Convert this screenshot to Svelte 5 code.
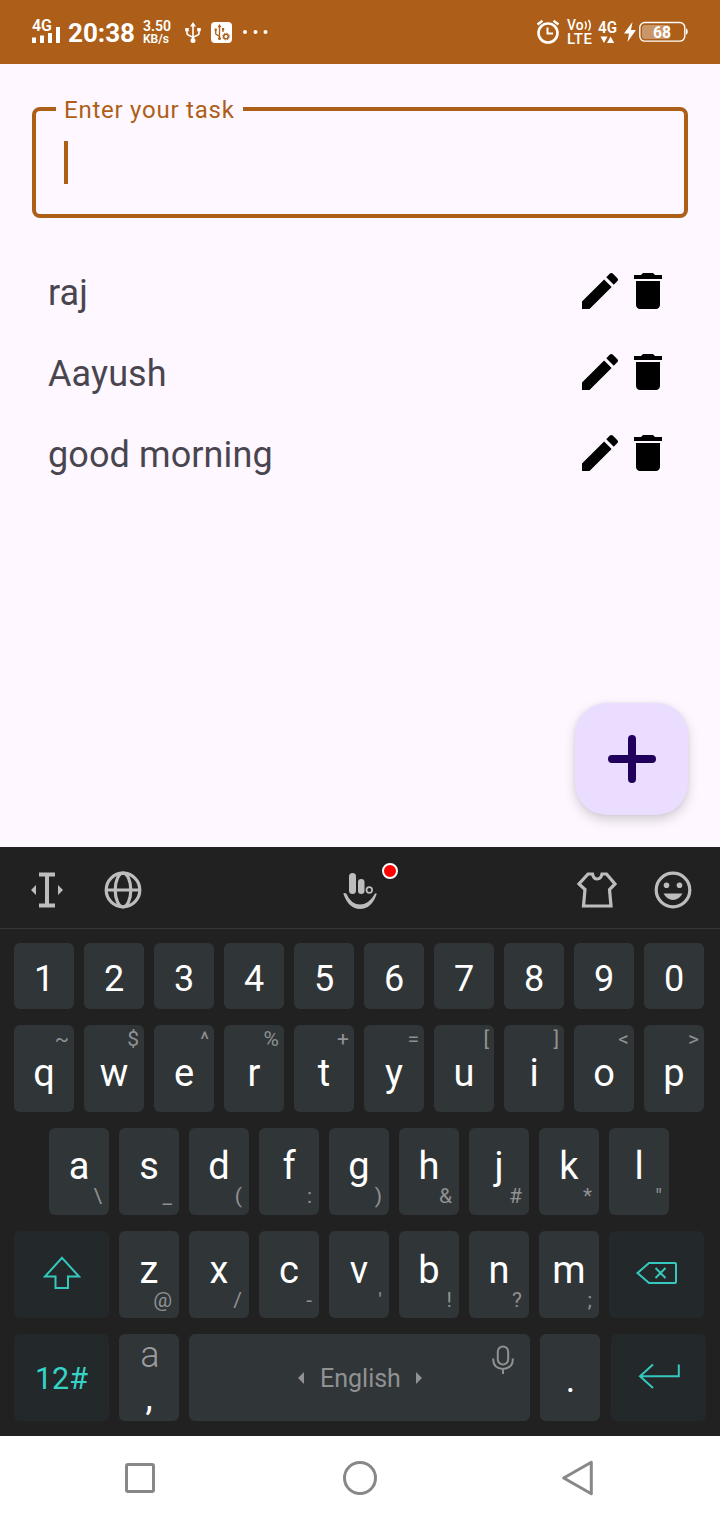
<script>
  const tasks = ['raj', 'Aayush', 'good morning'];
  const digits = [...'1234567890'];
  const pair = (keys, hints) => [...keys].map((k, i) => ({ k, h: hints[i] }));
  const top = pair('qwertyuiop', '~$^%+=[]<>');
  const home = pair('asdfghjkl', '\\_(:)&#*"');
  const bottom = pair('zxcvbnm', "@/-'!?;");
</script>

{#snippet key(item, place)}
  <button class="key letter {place}">
    <span class="main">{item.k}</span>
    <span class="hint">{item.h}</span>
  </button>
{/snippet}

<div class="screen">
  <header class="status">
    <svg class="signal" width="30" height="30" viewBox="0 0 30 30">
      <text x="0" y="14.700" font-size="16.500" font-weight="600" textLength="20" lengthAdjust="spacingAndGlyphs">4G</text>
      <path d="M0 21.500h4v5.500h-4zM8 19.500h4v7.500h-4zM16 17h4v10h-4zM24 11h4v16h-4z" />
    </svg>
    <span class="time">20:38</span>
    <svg class="speed" width="30" height="30" viewBox="0 0 30 30">
      <text x="0" y="15" font-size="14.500" font-weight="600" textLength="28" lengthAdjust="spacingAndGlyphs">3.50</text>
      <text x="0" y="27.300" font-size="13" font-weight="600" textLength="26" lengthAdjust="spacingAndGlyphs">KB/s</text>
    </svg>
    <svg class="usb" width="16" height="22" viewBox="0 0 16 22">
      <g fill="none" stroke="#fff" stroke-width="1.600"><path d="M8 4v14M2 8v3.500c0 2.500 6 2.500 6 4.500M14 8v3.500c0 2.500-6 2.500-6 4.500" /></g>
      <path d="M8 0l3 4.500H5zM.2 6h3.600v3.200H.2zM12.200 6h3.600v3.200h-3.600z" /><circle cx="8" cy="18.500" r="2.500" />
    </svg>
    <svg class="usbbox" width="21" height="21" viewBox="0 0 21 21">
      <rect width="21" height="21" rx="4" />
      <g fill="none" stroke="#ad5f19"><path stroke-width="1.300" d="M8.500 4.500v12M4.700 8v3.500c0 1.700 3.800 1.700 3.800 3.500M12 7v3" /><circle cx="15" cy="14.500" r="2.300" stroke-width="1.500" /><circle cx="15" cy="14.500" r="3.400" stroke-width="1" stroke-dasharray="1.340 1.340" /></g>
      <path class="ink" d="M8.500 2l2 3.300H6.500zM3.600 6.500h2.200v2.200H3.600zM11 6h2.200v2.200H11z" />
      <circle class="ink" cx="8.500" cy="16.500" r="1.500" />
    </svg>
    <svg class="dots" width="26" height="4" viewBox="0 0 26 4"><circle cx="2" cy="2" r="2" /><circle cx="12.500" cy="2" r="2" /><circle cx="22.500" cy="2" r="2" /></svg>

    <svg class="alarm" width="24" height="26" viewBox="0 0 24 26">
      <g fill="none" stroke="#fff"><circle cx="12" cy="14" r="9.500" stroke-width="2.600" /><path d="M11.500 8.500v6h5.500" stroke-width="2" /><path d="M1.500 5.500l5-3.800M22.500 5.500l-5-3.800" stroke-width="2.400" /></g>
    </svg>
    <svg class="volte" width="26" height="28" viewBox="0 0 26 28">
      <text x="0" y="12" font-size="14" font-weight="500" textLength="16.500" lengthAdjust="spacingAndGlyphs">Vo</text>
      <path d="M18 3.500q2.600 3.800 0 7.600M21.500 2q3.600 5.300 0 10.600" fill="none" stroke="#fff" stroke-width="1.500" />
      <text x="0" y="26" font-size="15" font-weight="500" textLength="25" lengthAdjust="spacing">LTE</text>
    </svg>
    <svg class="data" width="20" height="26" viewBox="0 0 20 26">
      <text x="0" y="14" font-size="16.500" font-weight="600" textLength="19" lengthAdjust="spacingAndGlyphs">4G</text>
      <path d="M2.500 17.500h7L6 24zM9 24h7.200L12.600 17.500z" />
    </svg>
    <svg class="bolt" width="12" height="20" viewBox="0 0 12 20"><path d="M8.500 0L0 11.500h5L3.500 20 12 8H7z" /></svg>
    <svg class="battery" width="49" height="22" viewBox="0 0 49 22">
      <rect x=".8" y="1.500" width="45" height="18.600" rx="5" fill="none" stroke="#fff" stroke-width="1.400" />
      <rect x="3" y="4" width="28" height="14" rx="3" fill-opacity=".35" />
      <path d="M47 7.500q1.700 0 1.700 3t-1.700 3z" />
      <text x="14" y="16.500" font-size="16" font-weight="700" textLength="18" lengthAdjust="spacingAndGlyphs">68</text>
    </svg>
  </header>

  <main>
    <fieldset>
      <legend>Enter your task</legend>
      <span class="caret"></span>
    </fieldset>

    <ul>
      {#each tasks as task}
        <li>
          <span>{task}</span>
          <svg width="48" height="48" viewBox="0 0 24 24"><path d="M3 17.250V21h3.750L17.810 9.940l-3.750-3.750L3 17.250zM20.710 7.040c.39-.39.39-1.020 0-1.410l-2.340-2.340c-.39-.39-1.020-.39-1.410 0l-1.830 1.830 3.750 3.750 1.830-1.830z" /></svg>
          <svg width="48" height="48" viewBox="0 0 24 24"><path d="M6 19c0 1.100.9 2 2 2h8c1.100 0 2-.9 2-2V7H6v12zM19 4h-3.500l-1-1h-5l-1 1H5v2h14V4z" /></svg>
        </li>
      {/each}
    </ul>

    <button class="fab" aria-label="Add">
      <svg width="48" height="48" viewBox="0 0 48 48"><path d="M24 4v40M4 24h40" stroke="#21005d" stroke-width="8" stroke-linecap="round" /></svg>
    </button>
  </main>

  <section class="keyboard">
    <div class="tools">
      <svg class="cursor" width="32" height="36" viewBox="0 0 32 36"><path d="M8 0.500h16v4h-6v27h6v4H8v-4h6v-27H8zM0 18l5-5v10zM32 18l-5-5v10z" /></svg>
      <svg class="globe" width="38" height="38" viewBox="0 0 38 38"><g class="line" stroke-width="3.200"><circle cx="19" cy="19" r="16.800" /><ellipse cx="19" cy="19" rx="7.800" ry="16.800" /><path d="M2 19h34" /></g></svg>
      <div class="logo">
        <svg width="34" height="36" viewBox="0 0 34 36">
          <rect x="6" y="0" width="7" height="21" rx="3.500" /><rect x="15" y="6" width="6.500" height="15" rx="3.200" />
          <circle cx="26.300" cy="17" r="2.800" fill="none" stroke="#bdbdbd" stroke-width="1.700" />
          <path d="M.3 20.500q1.200-1.200 3 0Q8 31.500 17 31.500T32 20.500q1.500-.8 1.700.5Q28.500 36 17 36T.3 20.500z" />
        </svg>
        <i class="badge"></i>
      </div>
      <svg class="shirt" width="40" height="36" viewBox="0 0 40 36"><path class="line" stroke-width="3.200" d="M11 2h4.500q1 5 4.700 5T25 2h4.500L38 12l-5.500 5.500L34 34H6.500L8 17.500 2 12z" /></svg>
      <svg class="smile" width="38" height="38" viewBox="0 0 38 38"><circle class="line" cx="19" cy="19" r="16.800" stroke-width="3.200" /><circle cx="12.500" cy="14.300" r="2.800" /><circle cx="25.500" cy="14.300" r="2.800" /><path d="M9.500 22.500h19q-3.500 6.500-9.500 6.500t-9.500-6.500z" /></svg>
    </div>

    <div class="rows">
      <div class="row">
        {#each digits as d}<button class="key digit"><span>{d}</span></button>{/each}
      </div>
      <div class="row tall">
        {#each top as item}{@render key(item, 'above')}{/each}
      </div>
      <div class="row tall inset">
        {#each home as item}{@render key(item, 'below')}{/each}
      </div>
      <div class="row tall">
        <button class="key action" aria-label="Shift">
          <svg width="38" height="34" viewBox="0 0 38 34"><path class="teal" d="M19 1.800L36 20.500H25V32H12.500V20.500H2z" /></svg>
        </button>
        {#each bottom as item}{@render key(item, 'below low')}{/each}
        <button class="key action" aria-label="Backspace">
          <svg width="42" height="24" viewBox="0 0 42 24"><path class="teal" d="M1.500 12L13 2h26q1 0 1 1v18q0 1-1 1H13zM19.500 7l10 10M29.500 7l-10 10" /></svg>
        </button>
      </div>
      <div class="row tall">
        <button class="key action"><span class="mode">12#</span></button>
        <button class="key comma"><span class="alt">a</span><span class="mark">,</span></button>
        <button class="key space">
          <svg class="arrow" width="6" height="12" viewBox="0 0 6 12"><path d="M6 0v12L0 6z" /></svg>
          <span>English</span>
          <svg class="arrow" width="6" height="12" viewBox="0 0 6 12"><path d="M0 0v12l6-6z" /></svg>
          <svg class="mic" width="22" height="30" viewBox="0 0 22 30"><g fill="none" stroke="#8f9192" stroke-width="2"><rect x="5.800" y="1.500" width="10.400" height="18" rx="5.200" /><path d="M1.200 13.500v1q0 8.700 9.800 9.500 9.800-.8 9.800-9.500v-1M11 24v5" /></g></svg>
        </button>
        <button class="key comma"><span class="mark dot">.</span></button>
        <button class="key action enter" aria-label="Enter">
          <svg width="42" height="26" viewBox="0 0 42 26"><path class="teal" d="M15 1.500L2 13.200 15 25M2 13.200h38.800V1.500" /></svg>
        </button>
      </div>
    </div>
  </section>

  <nav>
    <svg width="36" height="36" viewBox="0 0 36 36"><rect x="4.500" y="4.500" width="27" height="27" rx="1.500" /></svg>
    <svg width="36" height="36" viewBox="0 0 36 36"><circle cx="18" cy="18" r="15.500" /></svg>
    <svg width="36" height="36" viewBox="0 0 36 36"><path d="M29.300 2.200v31.600L1.700 18z" /></svg>
  </nav>
</div>

<style>
  :global(body) { margin: 0; }
  * { box-sizing: border-box; }
  .screen {
    width: 720px; height: 1520px; display: flex; flex-direction: column;
    font-family: Roboto, sans-serif; background: #fef7ff; overflow: hidden;
  }
  svg { display: block; flex: none; overflow: visible; }
  button { border: 0; padding: 0; margin: 0; font: inherit; color: inherit; }

  .status {
    height: 64px; flex: none; background: #ad5f19; color: #fff; fill: #fff;
    display: flex; align-items: flex-start; padding-left: 32px;
  }
  .signal { margin-top: 16px; }
  .time { margin: 17px 0 0 6px; width: 75px; font-size: 26px; line-height: 32px; font-weight: 700; }
  .speed { margin-top: 16px; }
  .usb { margin: 22px 0 0 12px; }
  .usbbox { margin: 22px 0 0 10px; }
  .ink { fill: #ad5f19; }
  .dots { margin: 30px 0 0 11px; }
  .alarm { margin: 19px 0 0 auto; }
  .volte { margin: 18px 0 0 7px; }
  .data { margin: 19px 0 0 5px; }
  .bolt { margin: 22px 0 0 6px; }
  .battery { margin: 21px 32px 0 3px; }

  main { height: 783px; flex: none; display: flex; flex-direction: column; padding: 32px 32px; }
  fieldset {
    margin: 0; padding: 0 24px; height: 122px; min-width: 0;
    border: 4px solid #ad5f19; border-radius: 8px; color: #ad5f19;
  }
  legend { height: 26px; padding: 0 8px; margin-left: -4px; font-size: 24px; line-height: 28px; letter-spacing: .76px; white-space: nowrap; }
  .caret { display: block; width: 4px; height: 43px; margin: 19px 0 0 4px; background: #ad5f19; }

  ul { list-style: none; margin: 32px 0 0; padding: 0 16px; }
  li { height: 81px; display: flex; align-items: center; }
  li span { flex: 1; font-size: 36px; line-height: 44px; letter-spacing: .1px; color: #49454f; padding-top: 5px; }
  .fab {
    width: 113px; height: 112px; margin: auto 0 0 auto; border-radius: 32px; background: #eaddff;
    display: grid; place-items: center;
    box-shadow: 0 5px 12px rgba(0, 0, 0, .17), 0 0 4px rgba(0, 0, 0, .06);
  }

  .keyboard { height: 589px; flex: none; background: #212121; color: #fff; }
  .tools {
    height: 82px; border-bottom: 1px solid #363636; display: flex; align-items: center;
    padding: 5px 28px 0 31px; fill: #bdbdbd;
  }
  .line { fill: none; stroke: #bdbdbd; }
  .globe { margin-left: 41px; }
  .logo { position: relative; margin: 2px 0 0 201px; }
  .badge {
    position: absolute; left: 39px; top: -10px; width: 16px; height: 16px;
    border: 2px solid #fff; border-radius: 50%; background: #f00;
  }
  .shirt { margin-left: auto; }
  .smile { margin-left: 37px; }

  .rows { display: flex; flex-direction: column; gap: 16px; padding: 14px 14px 0; }
  .row { display: flex; gap: 10px; height: 66px; }
  .tall { height: 87px; }
  .inset { padding-left: 35px; }
  .key { width: 60px; flex: none; border-radius: 6px; background: #303537; display: grid; align-content: start; }
  .digit { font-size: 36px; line-height: 40px; padding: 16px 0 0; }
  .letter { font-size: 38px; line-height: 40px; }
  .main, .hint { grid-area: 1 / 1; }
  .hint { font-size: 21px; line-height: 24px; color: #8f9192; text-align: right; }
  .above .main { padding-top: 28px; }
  .above .hint { padding: 2px 5px 0 0; }
  .below .main { padding-top: 18px; }
  .below .hint { padding: 56px 7px 0 0; }
  .low { padding-top: 1px; }
  .action { width: 95px; background: #23282a; place-items: center; align-content: center; }
  .action svg { margin-bottom: 4px; }
  .teal { fill: none; stroke: #35c9be; stroke-width: 2; }
  .mode { font-size: 30.500px; line-height: 36px; color: #35d3c7; padding-top: 2px; }
  .comma { font-size: 36px; line-height: 40px; grid-template-rows: 40px 47px; }
  .alt { font-size: 36px; font-weight: 350; color: #9a9c9d; padding: 1px 0 0 2px; }
  .mark { grid-row: 2; padding-top: 4px; }
  .dot { padding-top: 0; margin-top: -14px; padding-left: 1px; }
  .space { width: 341px; display: flex; align-items: flex-start; padding-left: 109px; fill: #8f9192; color: #8f9192; font-size: 25px; line-height: 30px; }
  .space span { margin: 30px 16px 0; width: 80px; white-space: nowrap; }
  .arrow { margin-top: 38px; }
  .mic { margin: 11px 0 0 70px; }
  .enter { margin-left: 1px; }

  nav { flex: 1; background: #fff; display: flex; justify-content: center; align-items: center; gap: 184px; }
  nav svg { fill: none; stroke: #888; stroke-width: 3; stroke-linejoin: round; }
</style>
